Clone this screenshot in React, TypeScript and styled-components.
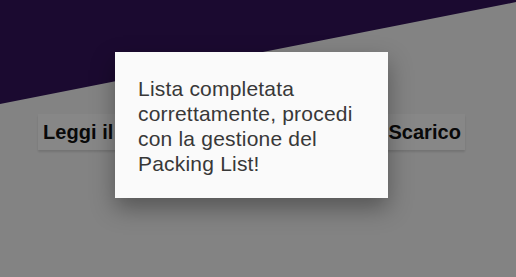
import React from 'react';
import styled, { createGlobalStyle } from 'styled-components';

const GlobalStyle = createGlobalStyle`
    html, body {
        margin: 0;
        padding: 0;
        background: #f8f8f8;
        font-family: 'Liberation Sans', Arial, sans-serif;
    }
`;

const Page = styled.div`
    position: relative;
    width: 516px;
    height: 277px;
    overflow: hidden;
    background: #f8f8f8;
`;

const Hero = styled.div`
    height: 104px;
    background: #33135b;
    clip-path: polygon(0 0, 100% 0, 100% 2%, 0 100%);
`;

const ActionCard = styled.div`
    margin: 10px 0 0 38px;
    width: 427px;
    height: 36px;
    box-sizing: border-box;
    padding: 0 5px;
    display: flex;
    align-items: center;
    background: #ffffff;
    box-shadow: 0 2px 2px rgba(0, 0, 0, 0.12);
    font-size: 20px;
    font-weight: 700;
    letter-spacing: 0.05px;
    color: #111;
    white-space: nowrap;
`;

const Overlay = styled.div`
    position: absolute;
    inset: 0;
    background: rgba(0, 0, 0, 0.47);
    display: flex;
    align-items: flex-start;
    padding: 52px 0 0 115px;
`;

const Dialog = styled.div`
    width: 273px;
    height: 146px;
    box-sizing: border-box;
    padding: 24px 20px 0 23px;
    background: #fafafa;
    box-shadow: 0 10px 22px rgba(0, 0, 0, 0.35);
`;

const Message = styled.p`
    margin: 0;
    font-size: 21px;
    line-height: 25px;
    letter-spacing: 0.2px;
    color: #383838;
`;

export default function App() {
    return (
        <>
            <GlobalStyle />
            <Page>
                <Hero />
                <ActionCard>Leggi il codice a barre della bolla di Scarico</ActionCard>
                <Overlay>
                    <Dialog>
                        <Message>
                            Lista completata correttamente, procedi con la gestione del Packing List!
                        </Message>
                    </Dialog>
                </Overlay>
            </Page>
        </>
    );
}
